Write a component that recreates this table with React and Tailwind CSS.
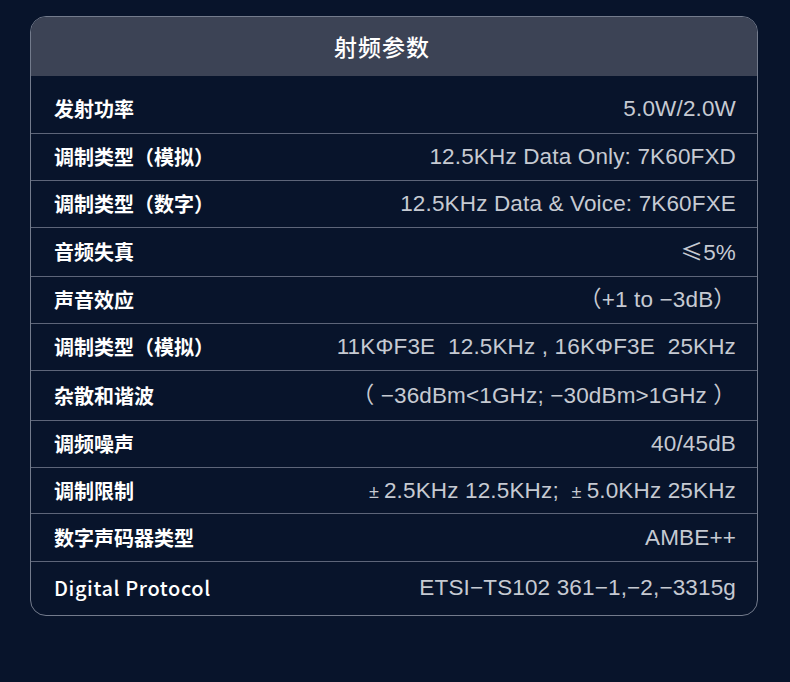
import React from "react";

const Pm = () => <span className="mr-[5px] text-[18px]">±</span>;

const rows = [
  { label: "发射功率", value: "5.0W/2.0W", h: "h-[57px] pt-[9px]" },
  { label: "调制类型（模拟）", value: "12.5KHz Data Only: 7K60FXD", h: "h-[47px]" },
  { label: "调制类型（数字）", value: "12.5KHz Data & Voice: 7K60FXE", h: "h-[47px]" },
  { label: "音频失真", value: <><span className="font-['Noto_Sans_CJK_SC']">≤</span>5%</>, h: "h-[49px]" },
  { label: "声音效应", value: "（+1 to −3dB）", h: "h-[47px]" },
  { label: "调制类型（模拟）", value: "11KΦF3E  12.5KHz , 16KΦF3E  25KHz", h: "h-[47px]" },
  { label: "杂散和谐波", value: "（ −36dBm<1GHz; −30dBm>1GHz ）", h: "h-[50px]" },
  { label: "调频噪声", value: "40/45dB", h: "h-[47px]" },
  { label: "调制限制", value: <><Pm />2.5KHz 12.5KHz;  <Pm />5.0KHz 25KHz</>, h: "h-[46px]" },
  { label: "数字声码器类型", value: "AMBE++", h: "h-[48px]" },
  { label: "Digital Protocol", value: "ETSI−TS102 361−1,−2,−3315g", h: "h-[54px] pb-[2px]", latin: true },
];

const cjk = { fontFamily: '"Noto Sans CJK SC", "Noto Sans", sans-serif' };

const App = () => {
  return (
    <div className="min-h-[682px] w-full bg-[#08142b] pt-4">
      <div className="ml-[30px] w-[728px] overflow-hidden rounded-[16px] border border-[#737b8c]">
        <div
          className="flex h-[59px] items-center justify-center bg-[#3c4355] pr-[24px] text-[23px] font-medium tracking-[1px] text-white"
          style={cjk}
        >
          射频参数
        </div>
        {rows.map((row, i) => (
          <div
            key={i}
            className={`flex items-center justify-between pl-[23px] pr-[21px] ${row.h} ${
              i > 0 ? "border-t border-[#5d6579]" : ""
            }`}
          >
            <span
              className={
                row.latin
                  ? "text-[20px] font-medium tracking-[0.6px] text-white"
                  : "text-[20px] font-bold text-white"
              }
              style={cjk}
            >
              {row.label}
            </span>
            <span
              className="whitespace-pre text-[22.5px] tracking-[0.15px] text-[#c6cad2]"
              style={{ fontFamily: '"Liberation Sans", "Noto Sans CJK SC", sans-serif' }}
            >
              {row.value}
            </span>
          </div>
        ))}
      </div>
    </div>
  );
};

export default App;
